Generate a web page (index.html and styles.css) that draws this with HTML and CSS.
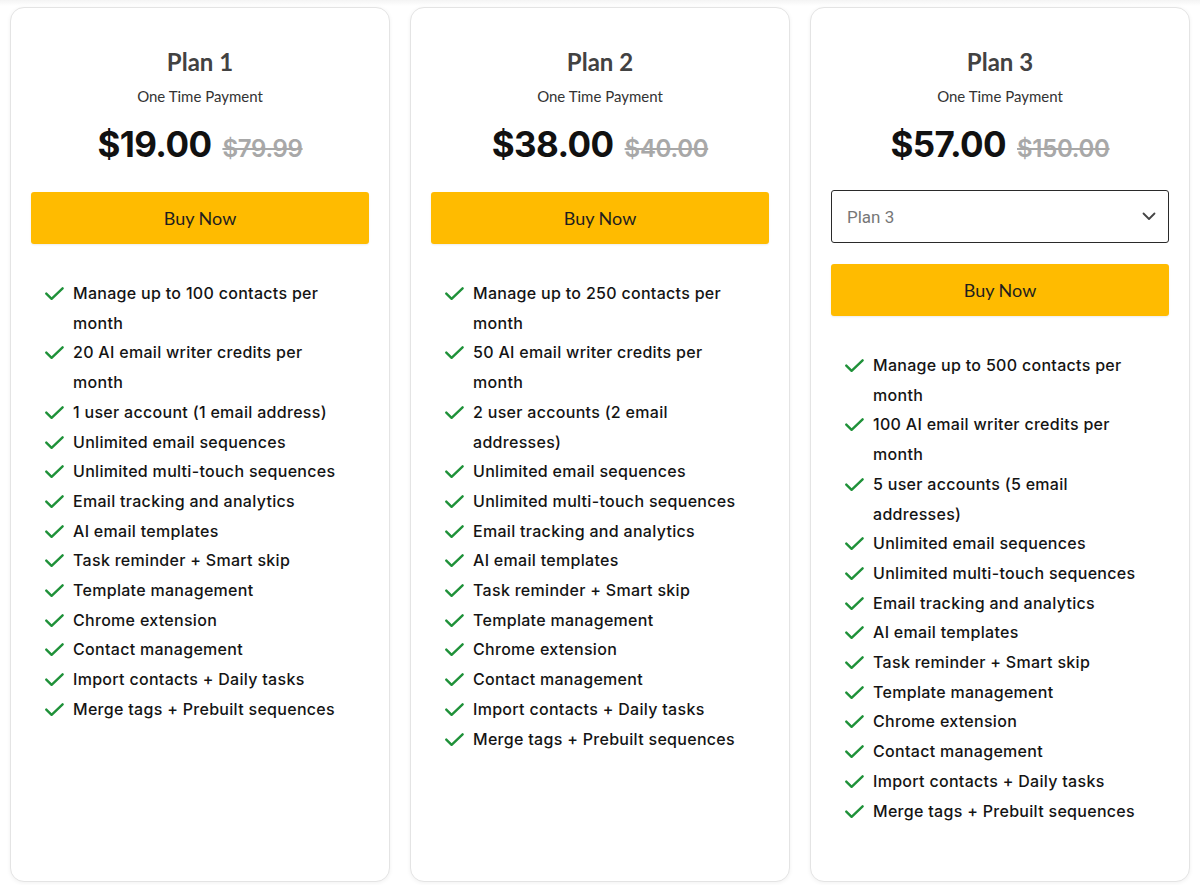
FILE: index.html
```html
<!DOCTYPE html>
<html lang="en">
<head>
<meta charset="utf-8">
<title>Pricing</title>
<link rel="stylesheet" href="styles.css">
</head>
<body>
<div class="plans">
  <section class="card">
    <h2 class="title">Plan 1</h2>
    <p class="sub">One Time Payment</p>
    <div class="price"><span class="now">$19.00</span><span class="was">$79.99</span></div>
    <button class="buy">Buy Now</button>
    <ul class="features">
      <li>Manage up to 100 contacts per month</li>
      <li>20 AI email writer credits per month</li>
      <li>1 user account (1 email address)</li>
      <li>Unlimited email sequences</li>
      <li>Unlimited multi-touch sequences</li>
      <li>Email tracking and analytics</li>
      <li>AI email templates</li>
      <li>Task reminder + Smart skip</li>
      <li>Template management</li>
      <li>Chrome extension</li>
      <li>Contact management</li>
      <li>Import contacts + Daily tasks</li>
      <li>Merge tags + Prebuilt sequences</li>
    </ul>
  </section>
  <section class="card">
    <h2 class="title">Plan 2</h2>
    <p class="sub">One Time Payment</p>
    <div class="price"><span class="now">$38.00</span><span class="was">$40.00</span></div>
    <button class="buy">Buy Now</button>
    <ul class="features">
      <li>Manage up to 250 contacts per month</li>
      <li>50 AI email writer credits per month</li>
      <li>2 user accounts (2 email addresses)</li>
      <li>Unlimited email sequences</li>
      <li>Unlimited multi-touch sequences</li>
      <li>Email tracking and analytics</li>
      <li>AI email templates</li>
      <li>Task reminder + Smart skip</li>
      <li>Template management</li>
      <li>Chrome extension</li>
      <li>Contact management</li>
      <li>Import contacts + Daily tasks</li>
      <li>Merge tags + Prebuilt sequences</li>
    </ul>
  </section>
  <section class="card">
    <h2 class="title">Plan 3</h2>
    <p class="sub">One Time Payment</p>
    <div class="price"><span class="now">$57.00</span><span class="was">$150.00</span></div>
    <div class="select">
      <span>Plan 3</span>
      <svg class="chev" width="14" height="9" viewBox="0 0 14 9"><path d="M1.5 1.5 L7 7 L12.5 1.5" fill="none" stroke="#444" stroke-width="1.8" stroke-linecap="round" stroke-linejoin="round"/></svg>
    </div>
    <button class="buy buy-gap">Buy Now</button>
    <ul class="features">
      <li>Manage up to 500 contacts per month</li>
      <li>100 AI email writer credits per month</li>
      <li>5 user accounts (5 email addresses)</li>
      <li>Unlimited email sequences</li>
      <li>Unlimited multi-touch sequences</li>
      <li>Email tracking and analytics</li>
      <li>AI email templates</li>
      <li>Task reminder + Smart skip</li>
      <li>Template management</li>
      <li>Chrome extension</li>
      <li>Contact management</li>
      <li>Import contacts + Daily tasks</li>
      <li>Merge tags + Prebuilt sequences</li>
    </ul>
  </section>
</div>
</body>
</html>
```
FILE: styles.css
```css
* { box-sizing: border-box; }
html, body { margin: 0; padding: 0; background: #fff; }
body { font-family: "Lato", "Liberation Sans", sans-serif; color: #333; }

.plans {
  height: 885px;
  padding: 7px 10px 3px;
  display: grid;
  grid-template-columns: repeat(3, 1fr);
  gap: 20px;
  background: linear-gradient(#f4f4f4, #fff 6px);
}

.card {
  background: #fff;
  border: 1px solid #e4e4e4;
  border-radius: 14px;
  box-shadow: 0 1px 4px rgba(0,0,0,0.06);
  padding: 39px 20px 0;
  display: flex;
  flex-direction: column;
}

.title {
  margin: 0;
  text-align: center;
  font-family: "Lato", sans-serif;
  font-size: 24px;
  font-weight: 700;
  line-height: 30px;
  color: #424242;
}

.sub {
  margin: 10px 0 0;
  text-align: center;
  font-family: "Lato", sans-serif;
  font-size: 15px;
  line-height: 18px;
  color: #333;
}

.price {
  margin-top: 17px;
  display: flex;
  justify-content: center;
  align-items: baseline;
  gap: 11px;
  font-family: "Inter", sans-serif;
  line-height: 44px;
}
.now { font-size: 35px; font-weight: 700; color: #111; letter-spacing: -0.6px; }
.was { font-size: 24px; font-weight: 600; color: #a8a8a8; text-decoration: line-through; letter-spacing: -0.3px; }

.buy {
  margin-top: 21px;
  height: 52px;
  width: 100%;
  border: 0;
  border-radius: 3px;
  background: #ffbb00;
  font-family: "Lato", sans-serif;
  font-size: 18px;
  color: #1f1f1f;
  box-shadow: 0 1px 2px rgba(0,0,0,0.08);
}
.buy-gap { margin-top: 21px; }

.select {
  margin-top: 19px;
  height: 53px;
  border: 1.5px solid #2a2a2a;
  border-radius: 3px;
  display: flex;
  align-items: center;
  justify-content: space-between;
  padding: 0 12px 0 15px;
  font-family: "Roboto", sans-serif;
  font-size: 17px;
  color: #777;
}

.features {
  list-style: none;
  margin: 35px 0 0;
  padding: 0 24px 0 14px;
  font-family: "Inter", sans-serif;
  font-size: 16px;
  font-weight: 500;
  letter-spacing: 0.3px;
  line-height: 29.7px;
  color: #141414;
}
.features li {
  position: relative;
  padding-left: 28px;
}
.features li::before {
  content: "";
  position: absolute;
  left: 0;
  top: 8px;
  width: 19px;
  height: 14px;
  background: url("data:image/svg+xml,%3Csvg xmlns='http://www.w3.org/2000/svg' width='19' height='14' viewBox='0 0 19 14'%3E%3Cpath d='M1.3 6.6 L6.6 11.8 L17.6 1.3' fill='none' stroke='%231f9139' stroke-width='2.4' stroke-linecap='round' stroke-linejoin='round'/%3E%3C/svg%3E") no-repeat;
}
```
